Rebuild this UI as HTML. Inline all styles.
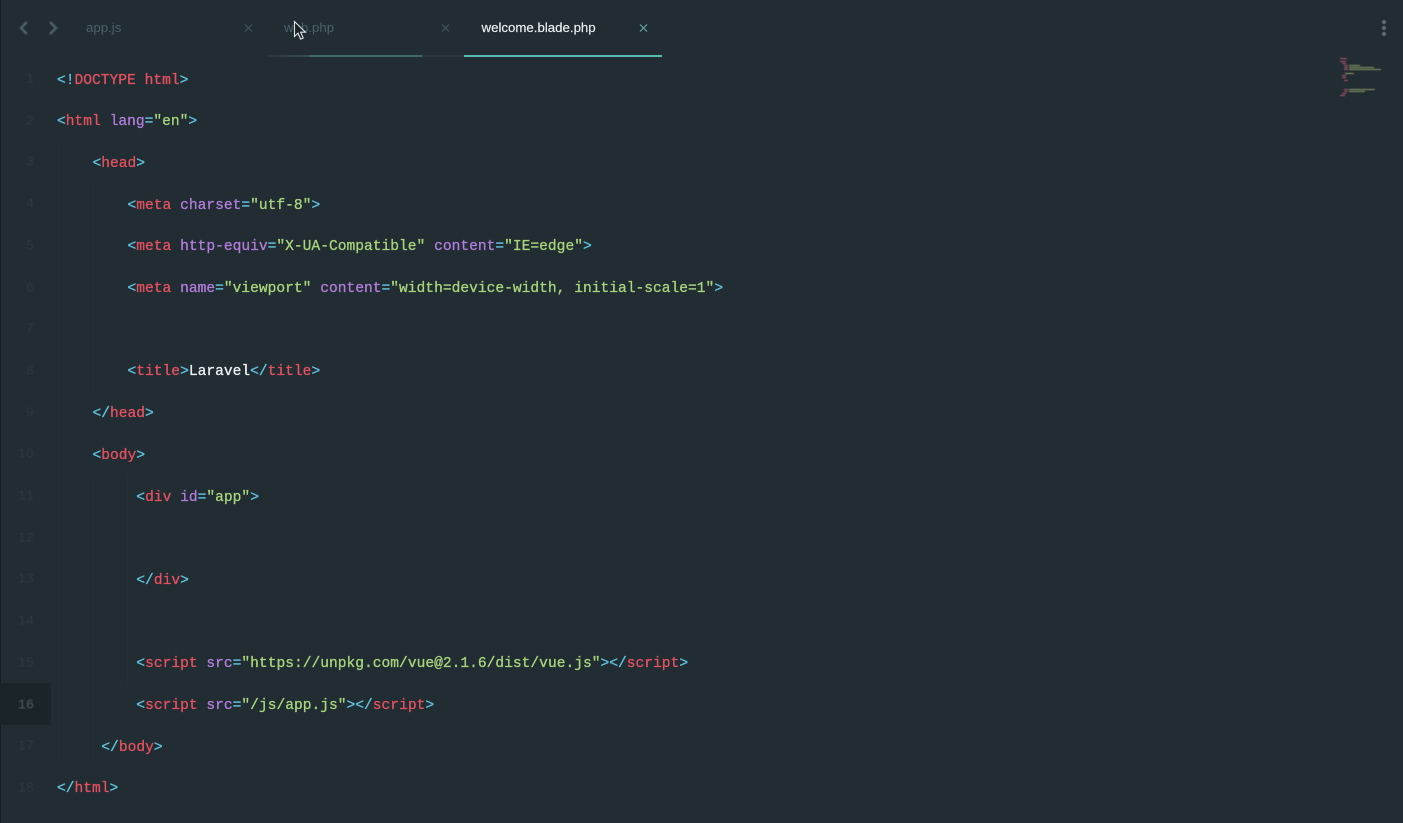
<!DOCTYPE html>
<html lang="en">
<head>
<meta charset="utf-8">
<title>welcome.blade.php</title>
<style>
*{box-sizing:border-box}
html,body{margin:0;padding:0;width:1403px;height:823px;overflow:hidden;background:#212c33}
#e{position:relative;width:1403px;height:823px;overflow:hidden;background:#212c33}
.edge{position:absolute;left:0;top:0;width:1px;height:823px;background:#161c20}
.l{position:absolute;white-space:pre;font:14.6px/20px "Liberation Mono",monospace;transform:translateY(-8.2px);filter:blur(.22px);-webkit-text-stroke:.3px currentColor}
.n{position:absolute;width:36px;left:0;text-align:right;padding-right:2px;font:13.5px/20px "Liberation Mono",monospace;color:#2f3a42;transform:translateY(-8.5px);filter:blur(.5px)}
.b{color:#5fc2de}.r{color:#e4515f}.p{color:#b27ddb}.g{color:#a8d57b}.w{color:#eef2f3}
.tab{position:absolute;top:20px;font:13.25px/16px "Liberation Sans",sans-serif;filter:blur(.3px)}
.bar{position:absolute;height:2px;top:55px;filter:blur(.25px)}
.guide{position:absolute;width:1px;background:#252f36}
.x{position:absolute;top:23px}
</style>
</head>
<body>
<div id="e">
<div class="edge"></div>
<div style="position:absolute;left:0;top:683px;width:51px;height:42px;background:#1b2429"></div>

<div class="guide" style="left:58px;top:140px;height:625px"></div>
<div class="guide" style="left:93px;top:182px;height:210px"></div>
<div class="guide" style="left:93px;top:474px;height:290px"></div>
<div class="guide" style="left:127px;top:474px;height:210px"></div>

<svg style="position:absolute;left:0;top:0;filter:blur(.4px)" width="70" height="50" fill="none" stroke="#4f6069" stroke-width="2.6">
<path d="M27 22l-6 6 6 6"/><path d="M50 22l6 6-6 6"/>
</svg>

<div class="tab" style="left:86px;color:#4c626b">app.js</div>
<div class="tab" style="left:284px;color:#4c626b">web.php</div>
<div class="tab" style="left:481.5px;color:#eef2f3;-webkit-text-stroke:.15px #eef2f3">welcome.blade.php</div>

<svg class="x" style="left:244px" width="10" height="10" stroke="#44555d" stroke-width="1.2"><path d="M1 1.5l7 7M8 1.5l-7 7"/></svg>
<svg class="x" style="left:441px" width="10" height="10" stroke="#44555d" stroke-width="1.2"><path d="M1 1.5l7 7M8 1.5l-7 7"/></svg>
<svg class="x" style="left:639px" width="10" height="10" stroke="#62a9a3" stroke-width="1.2"><path d="M1 1.5l7 7M8 1.5l-7 7"/></svg>

<div class="bar" style="left:267px;width:42px;background:linear-gradient(90deg,#27343a,#3b4e50)"></div>
<div class="bar" style="left:309px;width:113px;background:#3f6a68"></div>
<div class="bar" style="left:422px;width:42px;background:#2b383e"></div>
<div class="bar" style="left:464px;width:198px;background:#56bdb0"></div>

<svg style="position:absolute;left:293px;top:20px" width="14" height="21">
<path d="M1.5 1.5v15l3.5-3.4 2.6 6 2.6-1.1-2.6-5.8h4.9z" fill="#1a2126" stroke="#dfe5e8" stroke-width="1.1"/>
</svg>

<svg style="position:absolute;left:1381px;top:19px" width="6" height="18" fill="#56676f">
<circle cx="3" cy="3" r="2.2"/><circle cx="3" cy="9" r="2.2"/><circle cx="3" cy="15" r="2.2"/>
</svg>

<svg style="position:absolute;left:1336px;top:56px;filter:blur(.5px)" width="50" height="42">
<g fill="#b5566e">
<rect x="4" y="2" width="7" height="1"/><rect x="4" y="5" width="6" height="1"/><rect x="6" y="7" width="4" height="1"/>
<rect x="8" y="9" width="4" height="1"/><rect x="8" y="11" width="4" height="1"/><rect x="8" y="13" width="4" height="1"/>
<rect x="6" y="19" width="4" height="1"/><rect x="6" y="21" width="4" height="1"/><rect x="8" y="24" width="4" height="1"/>
<rect x="8" y="33" width="4" height="1"/><rect x="8" y="35" width="4" height="1"/><rect x="6" y="37" width="4" height="1"/><rect x="4" y="39" width="5" height="1"/>
</g>
<g fill="#8e9c6a">
<rect x="13" y="9" width="11" height="1"/><rect x="13" y="11" width="25" height="1"/><rect x="13" y="13" width="32" height="1"/>
<rect x="13" y="33" width="26" height="1"/><rect x="13" y="35" width="16" height="1"/><rect x="9" y="17" width="9" height="1"/>
</g>
</svg>

<div class="n" style="top:79px">1</div>
<div class="n" style="top:120.7px">2</div>
<div class="n" style="top:162.4px">3</div>
<div class="n" style="top:204.1px">4</div>
<div class="n" style="top:245.8px">5</div>
<div class="n" style="top:287.5px">6</div>
<div class="n" style="top:329.2px">7</div>
<div class="n" style="top:370.9px">8</div>
<div class="n" style="top:412.6px">9</div>
<div class="n" style="top:454.3px">10</div>
<div class="n" style="top:496px">11</div>
<div class="n" style="top:537.7px">12</div>
<div class="n" style="top:579.4px">13</div>
<div class="n" style="top:621.1px">14</div>
<div class="n" style="top:662.8px">15</div>
<div class="n" style="top:704.5px;color:#4e5d65">16</div>
<div class="n" style="top:746.2px">17</div>
<div class="n" style="top:787.9px">18</div>

<div class="l" style="left:57px;top:78.5px"><span class="b">&lt;!</span><span class="r">DOCTYPE html</span><span class="b">&gt;</span></div>
<div class="l" style="left:57px;top:120.2px"><span class="b">&lt;</span><span class="r">html</span> <span class="p">lang</span><span class="b">=</span><span class="g">"en"</span><span class="b">&gt;</span></div>
<div class="l" style="left:92.5px;top:161.9px"><span class="b">&lt;</span><span class="r">head</span><span class="b">&gt;</span></div>
<div class="l" style="left:127.5px;top:203.6px"><span class="b">&lt;</span><span class="r">meta</span> <span class="p">charset</span><span class="b">=</span><span class="g">"utf-8"</span><span class="b">&gt;</span></div>
<div class="l" style="left:127.5px;top:245.3px"><span class="b">&lt;</span><span class="r">meta</span> <span class="p">http-equiv</span><span class="b">=</span><span class="g">"X-UA-Compatible"</span> <span class="p">content</span><span class="b">=</span><span class="g">"IE=edge"</span><span class="b">&gt;</span></div>
<div class="l" style="left:127.5px;top:287px"><span class="b">&lt;</span><span class="r">meta</span> <span class="p">name</span><span class="b">=</span><span class="g">"viewport"</span> <span class="p">content</span><span class="b">=</span><span class="g">"width=device-width, initial-scale=1"</span><span class="b">&gt;</span></div>
<div class="l" style="left:127.5px;top:370.4px"><span class="b">&lt;</span><span class="r">title</span><span class="b">&gt;</span><span class="w">Laravel</span><span class="b">&lt;/</span><span class="r">title</span><span class="b">&gt;</span></div>
<div class="l" style="left:92.5px;top:412.1px"><span class="b">&lt;/</span><span class="r">head</span><span class="b">&gt;</span></div>
<div class="l" style="left:92.5px;top:453.8px"><span class="b">&lt;</span><span class="r">body</span><span class="b">&gt;</span></div>
<div class="l" style="left:136.3px;top:495.5px"><span class="b">&lt;</span><span class="r">div</span> <span class="p">id</span><span class="b">=</span><span class="g">"app"</span><span class="b">&gt;</span></div>
<div class="l" style="left:136.3px;top:578.9px"><span class="b">&lt;/</span><span class="r">div</span><span class="b">&gt;</span></div>
<div class="l" style="left:136.3px;top:662.3px"><span class="b">&lt;</span><span class="r">script</span> <span class="p">src</span><span class="b">=</span><span class="g">"https://unpkg.com/vue@2.1.6/dist/vue.js"</span><span class="b">&gt;&lt;/</span><span class="r">script</span><span class="b">&gt;</span></div>
<div class="l" style="left:136.3px;top:704px"><span class="b">&lt;</span><span class="r">script</span> <span class="p">src</span><span class="b">=</span><span class="g">"/js/app.js"</span><span class="b">&gt;&lt;/</span><span class="r">script</span><span class="b">&gt;</span></div>
<div class="l" style="left:101.3px;top:745.7px"><span class="b">&lt;/</span><span class="r">body</span><span class="b">&gt;</span></div>
<div class="l" style="left:57px;top:787.4px"><span class="b">&lt;/</span><span class="r">html</span><span class="b">&gt;</span></div>
</div>
</body>
</html>
